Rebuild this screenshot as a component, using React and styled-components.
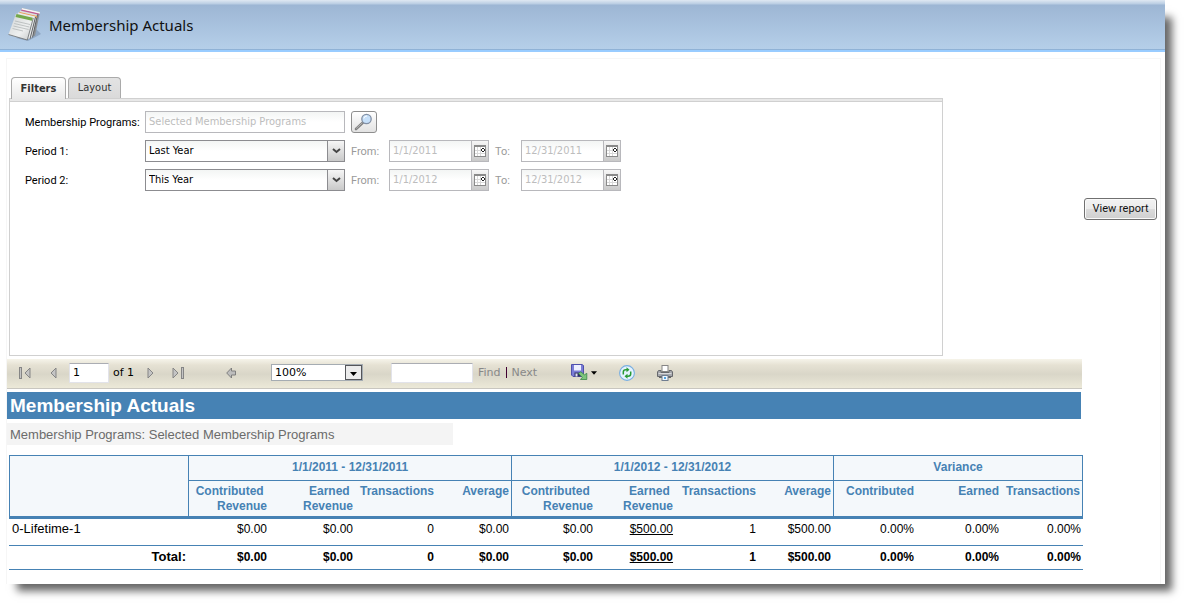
import React from 'react';
import styled, { createGlobalStyle, css } from 'styled-components';

const blue = '#4682b4';
const uiFont = '"DejaVu Sans Condensed", "Noto Sans", sans-serif';
const labelFont = 'Roboto, sans-serif';
const wideFont = '"DejaVu Sans", sans-serif';
const reportFont = '"Liberation Sans", Arial, sans-serif';

const GlobalStyle = createGlobalStyle`
  *, *::before, *::after { box-sizing: border-box; }
  body { margin: 0; background: #fff; font-family: ${uiFont}; font-size: 11px; color: #000; }
  button, input, select { font: inherit; color: inherit; margin: 0; }
`;

const Page = styled.main`
  margin: 0 25px 25px 0;
  background: #fff;
  box-shadow: 12px 12px 8px -5px rgba(0, 0, 0, 0.6);
`;

const Header = styled.header`
  display: flex;
  align-items: center;
  gap: 8px;
  height: 52px;
  padding-left: 8px;
  background: linear-gradient(#dfe8f2 0, #b8cce2 4px, #9db6d4 5px, #b5cfe9 49px);
  border-bottom: 2px solid #99ccff;
  box-shadow: inset 0 -1px #8fb2d6;

  h1 {
    margin: 0;
    font: 400 15px/24px "Noto Sans", sans-serif;
    color: #111;
  }
`;

const Content = styled.section`
  margin: 6px 4px 0 6px;
  padding-bottom: 14px;
  border: 1px solid #f6f6f6;
  border-bottom: 0;
`;

const Parameters = styled.div`
  display: flex;
  align-items: center;
  padding: 0 3px 0 2px;
`;

const FilterArea = styled.div`
  flex: 1;
  min-width: 0;
  padding: 18px 0 3px;
`;

const SubmitArea = styled.div`
  display: flex;
  justify-content: flex-end;
  width: 214px;
`;

const ViewButton = styled.button`
  width: 73px;
  height: 22px;
  padding: 0;
  border: 1px solid #707070;
  border-radius: 3px;
  background: linear-gradient(#f3f3f3 0, #ebebeb 48%, #dcdcdc 50%, #cfcfcf 100%);
  box-shadow: inset 0 0 0 1px #fafafa;
  font: 11px/20px ${labelFont};
  color: #111;
  white-space: nowrap;
`;

const TabList = styled.div`
  display: flex;
  align-items: flex-start;
  gap: 2px;
  height: 21px;
  padding-left: 2px;
`;

const Tab = styled.button`
  height: 21px;
  padding: 0;
  width: ${(p) => (p.$active ? 55 : 53)}px;
  border: 1px solid #aaa;
  border-bottom: 0;
  border-radius: 4px 4px 0 0;
  background: linear-gradient(#e3e3e3, #dadada);
  color: #333;
  line-height: 20px;
  ${(p) =>
    p.$active &&
    css`
      position: relative;
      height: 22px;
      background: linear-gradient(#fff, #e9e9e9);
      font-weight: 700;
    `}
`;

const Panel = styled.div`
  min-height: 258px;
  border: 1px solid #d0d0d0;
`;

const PanelStrip = styled.div`
  height: 3px;
  background: #e8e8e8;
  border-bottom: 1px solid #d0d0d0;
`;

const Form = styled.form`
  display: flex;
  flex-direction: column;
  gap: 7px;
  padding: 9px 15px;
`;

const FormRow = styled.div`
  display: flex;
  align-items: center;
  height: 22px;
`;

const Label = styled.label`
  width: 120px;
  padding-top: 2px;
  font: 11px/20px ${labelFont};
  white-space: nowrap;
`;

const RangeLabel = styled(Label)`
  width: ${(p) => p.$width}px;
  padding-left: 6px;
  color: #9a9a9a;
`;

const Field = styled.div`
  position: relative;
  display: flex;
  width: ${(p) => p.$width}px;
  height: 22px;
  border: 1px solid ${(p) => (p.$muted ? '#b8b8bc' : '#8c8c90')};
  background: linear-gradient(#f3f5f4, #fff 10px);
  color: ${(p) => (p.$muted ? '#bdbdbd' : '#000')};

  input, select {
    flex: 1;
    min-width: 0;
    height: 20px;
    padding: 0 3px 2px;
    border: 0;
    outline: 0;
    border-radius: 0;
    background: transparent;
    appearance: none;
  }
`;

const endCap = css`
  display: flex;
  align-items: center;
  justify-content: center;
  width: 17px;
  height: 20px;
  padding: 0;
  border: 0;
  border-left: 1px solid ${(p) => (p.$muted ? '#b8b8bc' : '#8c8c90')};
  background: linear-gradient(#f6f6f6, #c9c9c9);
`;

const SelectArrow = styled.span`
  ${endCap}
  position: absolute;
  top: 0;
  right: 0;
  pointer-events: none;
`;

const CalendarButton = styled.button`
  ${endCap}
`;

const SearchButton = styled.button`
  display: flex;
  align-items: center;
  justify-content: center;
  width: 26px;
  height: 22px;
  margin-left: 6px;
  padding: 0;
  border: 1px solid #8e8e8e;
  border-radius: 3px;
  background: linear-gradient(#fff, #e2e2e2);
`;

const Report = styled.div`
  margin-right: 78px;
`;

const Toolbar = styled.div`
  display: flex;
  align-items: center;
  height: 30px;
  padding: 0 12px 2px;
  border-bottom: 1px solid #c8c6c0;
  background: linear-gradient(#f6f4ea 0, #e6e2d4 6px, #d9d6c8 15px, #e2dfd0 22px, #ece9d8 29px);
  font: 11px/20px ${wideFont};
`;

const ToolGroup = styled.div`
  display: flex;
  align-items: center;
  width: ${(p) => p.$width}px;
  gap: ${(p) => p.$gap || 0}px;
`;

const ToolButton = styled.button`
  display: flex;
  flex: none;
  align-items: center;
  padding: 0;
  border: 0;
  background: none;
`;

const ToolInput = styled.input`
  width: ${(p) => p.$width}px;
  height: 20px;
  padding: 0 3px;
  border: 1px solid #e2e3ea;
  border-top-color: #abadb3;
  border-radius: 1px;
  background: #fff;
`;

const ZoomField = styled.div`
  position: relative;
  width: 92px;
  height: 17px;
  border: 1px solid #a5acb2;
  background: #fff;

  select {
    display: block;
    width: 100%;
    height: 15px;
    padding: 0 3px;
    border: 0;
    background: transparent;
    appearance: none;
    line-height: 15px;
  }
`;

const ZoomArrow = styled.span`
  position: absolute;
  top: 0;
  right: 0;
  display: flex;
  align-items: flex-end;
  justify-content: center;
  width: 17px;
  height: 15px;
  padding-bottom: 3px;
  border: 1px solid #55565a;
  background: #ececec;
  pointer-events: none;
`;

const ToolLink = styled.a`
  color: #888;
  text-decoration: none;
`;

const Divider = styled.span`
  width: 1px;
  height: 11px;
  background: #400030;
`;

const ReportTitle = styled.h2`
  margin: 3px 1px 0 0;
  height: 27px;
  padding-left: 3px;
  background: ${blue};
  color: #fff;
  font: 700 19px/27px ${reportFont};
`;

const ReportSubtitle = styled.p`
  width: fit-content;
  min-width: 446px;
  margin: 4px 0 10px;
  padding: 2px 0 0 3px;
  background: #f4f4f4;
  color: #6b6b6b;
  font: 13px/20px ${reportFont};
`;

const Table = styled.table`
  width: calc(100% - 1px);
  margin-left: 2px;
  table-layout: fixed;
  border-collapse: separate;
  border-spacing: 0;
  font: 12px/15px ${reportFont};
`;

const HeadCell = styled.th`
  height: ${(p) => (p.$group ? 25 : 39)}px;
  padding: ${(p) => (p.$group ? '0 0 2px' : '3px 2px 0 0')};
  vertical-align: ${(p) => (p.$group ? 'middle' : 'top')};
  text-align: ${(p) => (p.$group ? 'center' : 'right')};
  white-space: pre;
  border-top: 1px solid ${blue};
  border-left: ${(p) => (p.$start ? `1px solid ${blue}` : '0')};
  border-right: ${(p) => (p.$end ? `1px solid ${blue}` : '0')};
  border-bottom: ${(p) => (p.$thick ? `3px solid ${blue}` : '0')};
  background: #f4f8fb;
  color: ${blue};
`;

const Cell = styled.td`
  height: ${(p) => (p.$total ? 24 : 27)}px;
  padding: ${(p) => (p.$total ? 4 : 3)}px 2px 0 0;
  vertical-align: top;
  text-align: right;
  font-weight: ${(p) => (p.$total ? 700 : 400)};
  border-bottom: 1px solid ${blue};

  a { color: #000; }
`;

const RowHead = styled.th`
  padding: ${(p) => (p.$total ? '3px 2px 0' : '2px 3px 0')};
  vertical-align: top;
  text-align: ${(p) => (p.$total ? 'right' : 'left')};
  font-size: 13px;
  font-weight: ${(p) => (p.$total ? 700 : 400)};
  border-bottom: 1px solid ${blue};
`;

const ReportIcon = () => (
  <svg width="33" height="34" viewBox="0 0 33 34" aria-hidden="true">
    <defs>
      <linearGradient id="sheet" x1="0" y1="0" x2="1" y2="1">
        <stop offset="0" stopColor="#cfd2d2" />
        <stop offset=".6" stopColor="#eef0f0" />
        <stop offset="1" stopColor="#c3c6c6" />
      </linearGradient>
    </defs>
    <path d="M8 30 L20 33 L33 26 L28 21 Z" fill="#6f88a6" opacity=".5" />
    <path d="M14 0 L32 4 L27 28 L10 24 Z" fill="#8d9093" />
    <path d="M14 0 L32 4 L31.500 6 L13.500 2 Z" fill="#f6f6f6" />
    <path d="M13.500 1.500 L31 5.500 L30.500 7 L13 3.200 Z" fill="#c25c92" />
    <path d="M12 2.500 L29.500 6.500 L29 9 L24.500 29.500 L8 26 Z" fill="#dcdedf" />
    <path d="M29.500 6.500 L24.500 29.500" stroke="#5e6164" strokeWidth="1" />
    <path d="M11.500 4 L29 8 L28.500 10 L11 6 Z" fill="#eb9a4a" />
    <path d="M10 4.500 L27.500 8.500 L22.500 31 L5 28 Z" fill="#e8eaea" />
    <path d="M27.500 9 L22 31" stroke="#5e6164" strokeWidth="1" />
    <path d="M8 5.500 L25.500 9.500 L19.500 32 L.5 26.500 Z" fill="url(#sheet)" />
    <path d="M25.300 10 L19.300 32 L.5 26.500" stroke="#74787b" strokeWidth=".9" fill="none" />
    <path d="M8.500 6 L24.800 9.800 L24 12.800 L7.500 9 Z" fill="#73a84c" />
    <path d="M7 13 L22 16.500 M6.200 15.500 L21.300 19 M5.400 18 L20.600 21.500 M4.500 20.500 L15 23" stroke="#b3b7b7" strokeWidth=".8" fill="none" />
  </svg>
);

const MagnifierIcon = () => (
  <svg width="20" height="18" viewBox="0 0 20 18" aria-hidden="true">
    <path d="M2 16 L9 9.500" stroke="#808080" strokeWidth="2.600" strokeLinecap="round" />
    <path d="M2.200 15.500 L8.500 9.700" stroke="#b5b5b5" strokeWidth="1" />
    <circle cx="12.500" cy="6" r="4.700" fill="#c6e0fa" stroke="#8290a5" strokeWidth="1.300" />
    <path d="M9.800 5.500 A3 3 0 0 1 13 3" stroke="#fff" fill="none" />
  </svg>
);

const ChevronIcon = () => (
  <svg width="9" height="6" viewBox="0 0 9 6" aria-hidden="true">
    <path d="M1 1 L4.500 4 L8 1" fill="none" stroke="#444" strokeWidth="2" />
  </svg>
);

const CalendarIcon = () => (
  <svg width="12" height="12" viewBox="0 0 12 12" shapeRendering="crispEdges" aria-hidden="true">
    <rect x=".5" y=".5" width="11" height="11" fill="#fff" stroke="#8a8a8a" />
    <rect x="0" y="0" width="12" height="2" fill="#8a8a8a" />
    <path d="M3.500 2 V11 M6.500 2 V11 M1 5.500 H11 M1 8.500 H11" stroke="#d9d9d9" />
    <path d="M8 3.500 H10 M8 6.500 H10 M7.500 4 V6 M10.500 4 V6" stroke="#222" />
    <rect x="8" y="4" width="2" height="2" fill="#fff" />
  </svg>
);

const NavIcon = ({ back, bar }) => (
  <svg width={bar ? 12 : 7} height="12" viewBox={bar ? '0 0 12 12' : '0 0 7 12'} aria-hidden="true">
    <g
      transform={back ? undefined : `translate(${bar ? 12 : 7} 0) scale(-1 1)`}
      fill="#c4c4c4"
      stroke="#858585"
      strokeWidth="1"
    >
      {bar && <rect x=".5" y=".5" width="2" height="11" />}
      <path d={bar ? 'M11 1 V11 L6 6 Z' : 'M6 1 V11 L1 6 Z'} />
    </g>
  </svg>
);

const BackIcon = () => (
  <svg width="10" height="12" viewBox="0 0 10 12" aria-hidden="true">
    <path d="M.7 6 L5.500 1 V4 H9.500 V8 H5.500 V11 Z" fill="#bdbdbd" stroke="#777" strokeWidth=".9" />
  </svg>
);

const CaretIcon = ({ width = 7 }) => (
  <svg width={width} height="4" viewBox="0 0 7 4" aria-hidden="true">
    <path d="M0 0 H7 L3.500 4 Z" fill="#000" />
  </svg>
);

const ExportIcon = () => (
  <svg width="17" height="18" viewBox="0 0 17 18" aria-hidden="true">
    <path d="M.5 .5 H11 L12.500 1.500 V12.500 H2 L.5 11 Z" fill="#7a7cd6" stroke="#4f50ac" />
    <rect x="3" y="1" width="7" height="5.500" fill="#eef0ff" />
    <rect x="3.500" y="8.500" width="6" height="4" fill="#303062" />
    <rect x="4.500" y="9.500" width="2" height="3" fill="#dfe2f6" />
    <path d="M7.500 9.500 L9.800 7.800 L13.500 10.800 L15.800 9.300 V15.500 H9.500 L11.300 13.300 Z" fill="#7cc47c" stroke="#388647" strokeWidth=".8" />
  </svg>
);

const RefreshIcon = () => (
  <svg width="16" height="16" viewBox="0 0 16 16" aria-hidden="true">
    <circle cx="8" cy="8" r="7.400" fill="#e4f2ff" stroke="#77aee0" strokeWidth="1.100" />
    <path d="M4.300 9.500 V7 Q4.300 4.800 7 4.800 H8" stroke="#289a34" strokeWidth="1.500" fill="none" />
    <path d="M7.500 2.300 L10.500 4.800 L7.500 7.300 Z" fill="#289a34" />
    <path d="M11.700 6.500 V9 Q11.700 11.200 9 11.200 H8" stroke="#289a34" strokeWidth="1.500" fill="none" />
    <path d="M8.500 8.700 L5.500 11.200 L8.500 13.700 Z" fill="#289a34" />
  </svg>
);

const PrinterIcon = () => (
  <svg width="16" height="16" viewBox="0 0 16 16" aria-hidden="true">
    <rect x="5" y=".5" width="6" height="6" fill="#fff" stroke="#858585" />
    <path d="M1.500 5.500 H4 V7.500 H12 V5.500 H14.500 L15.500 7 V11.500 H.5 V7 Z" fill="#a6a8ad" stroke="#66686d" />
    <path d="M1.500 8.500 H14.500" stroke="#d7d8dc" />
    <rect x="2" y="12" width="12" height="1" fill="#666" />
    <rect x="5" y="10.500" width="6" height="5" fill="#eef6ff" stroke="#6f7d90" />
    <rect x="7" y="12" width="2" height="2" fill="#4fa3e2" />
  </svg>
);

const DateField = ({ id, value }) => (
  <Field $width={100} $muted>
    <input id={id} defaultValue={value} readOnly />
    <CalendarButton type="button" $muted aria-label="Choose date">
      <CalendarIcon />
    </CalendarButton>
  </Field>
);

const PeriodRow = ({ n, option, from, to }) => (
  <FormRow>
    <Label htmlFor={`period${n}`}>Period {n}:</Label>
    <Field $width={200}>
      <select id={`period${n}`} defaultValue={option}>
        <option>Last Year</option>
        <option>This Year</option>
      </select>
      <SelectArrow><ChevronIcon /></SelectArrow>
    </Field>
    <RangeLabel $width={44} htmlFor={`from${n}`}>From:</RangeLabel>
    <DateField id={`from${n}`} value={from} />
    <RangeLabel $width={32} htmlFor={`to${n}`}>To:</RangeLabel>
    <DateField id={`to${n}`} value={to} />
  </FormRow>
);

const columnWidths = [179, 81, 86, 81, 75, 84, 80, 83, 75, 83, 85, 82];

const columns = [
  { text: 'Contributed \nRevenue', start: true },
  { text: 'Earned \nRevenue' },
  { text: 'Transactions' },
  { text: 'Average' },
  { text: 'Contributed \nRevenue', start: true },
  { text: 'Earned \nRevenue' },
  { text: 'Transactions' },
  { text: 'Average' },
  { text: 'Contributed', start: true },
  { text: 'Earned' },
  { text: 'Transactions', end: true },
];

const values = ['$0.00', '$0.00', '0', '$0.00', '$0.00', '$500.00', '1', '$500.00', '0.00%', '0.00%', '0.00%'];

const DataRow = ({ name, total }) => (
  <tr>
    <RowHead scope="row" $total={total}>{name}</RowHead>
    {values.map((v, i) => (
      <Cell key={i} $total={total}>{i === 5 ? <a href="#detail">{v}</a> : v}</Cell>
    ))}
  </tr>
);

export default function App() {
  return (
    <>
      <GlobalStyle />
      <Page>
        <Header>
          <ReportIcon />
          <h1>Membership Actuals</h1>
        </Header>
        <Content>
          <Parameters>
            <FilterArea>
              <TabList role="tablist">
                <Tab role="tab" aria-selected="true" $active>Filters</Tab>
                <Tab role="tab" aria-selected="false">Layout</Tab>
              </TabList>
              <Panel role="tabpanel">
                <PanelStrip />
                <Form>
                  <FormRow>
                    <Label htmlFor="programs">Membership Programs:</Label>
                    <Field $width={200} $muted>
                      <input id="programs" defaultValue="Selected Membership Programs" readOnly />
                    </Field>
                    <SearchButton type="button" aria-label="Search programs"><MagnifierIcon /></SearchButton>
                  </FormRow>
                  <PeriodRow n={1} option="Last Year" from="1/1/2011" to="12/31/2011" />
                  <PeriodRow n={2} option="This Year" from="1/1/2012" to="12/31/2012" />
                </Form>
              </Panel>
            </FilterArea>
            <SubmitArea>
              <ViewButton type="button">View report</ViewButton>
            </SubmitArea>
          </Parameters>
          <Report>
            <Toolbar role="toolbar">
              <ToolGroup $width={50} $gap={19}>
                <ToolButton aria-label="First page"><NavIcon back bar /></ToolButton>
                <ToolButton aria-label="Previous page"><NavIcon back /></ToolButton>
              </ToolGroup>
              <ToolGroup $width={78} $gap={4}>
                <ToolInput $width={40} aria-label="Page" defaultValue="1" />
                <span>of 1</span>
              </ToolGroup>
              <ToolGroup $width={79} $gap={18}>
                <ToolButton aria-label="Next page"><NavIcon /></ToolButton>
                <ToolButton aria-label="Last page"><NavIcon bar /></ToolButton>
              </ToolGroup>
              <ToolGroup $width={45}>
                <ToolButton aria-label="Back"><BackIcon /></ToolButton>
              </ToolGroup>
              <ToolGroup $width={120}>
                <ZoomField>
                  <select aria-label="Zoom" defaultValue="100%">
                    <option>100%</option>
                  </select>
                  <ZoomArrow><CaretIcon /></ZoomArrow>
                </ZoomField>
              </ToolGroup>
              <ToolGroup $width={180} $gap={5}>
                <ToolInput $width={82} aria-label="Find text" />
                <ToolLink href="#find">Find</ToolLink>
                <Divider />
                <ToolLink href="#next">Next</ToolLink>
              </ToolGroup>
              <ToolGroup $width={48} $gap={3}>
                <ToolButton aria-label="Export"><ExportIcon /></ToolButton>
                <CaretIcon width={6} />
              </ToolGroup>
              <ToolGroup $width={38}>
                <ToolButton aria-label="Refresh"><RefreshIcon /></ToolButton>
              </ToolGroup>
              <ToolButton aria-label="Print"><PrinterIcon /></ToolButton>
            </Toolbar>
            <ReportTitle>Membership Actuals</ReportTitle>
            <ReportSubtitle>Membership Programs: Selected Membership Programs</ReportSubtitle>
            <Table>
              <colgroup>
                {columnWidths.map((w, i) => <col key={i} width={w} />)}
              </colgroup>
              <thead>
                <tr>
                  <HeadCell rowSpan={2} $start $thick />
                  <HeadCell colSpan={4} $group $start>1/1/2011 - 12/31/2011</HeadCell>
                  <HeadCell colSpan={4} $group $start>1/1/2012 - 12/31/2012</HeadCell>
                  <HeadCell colSpan={3} $group $start $end>Variance</HeadCell>
                </tr>
                <tr>
                  {columns.map((c, i) => (
                    <HeadCell key={i} $start={c.start} $end={c.end} $thick>{c.text}</HeadCell>
                  ))}
                </tr>
              </thead>
              <tbody>
                <DataRow name="0-Lifetime-1" />
                <DataRow name="Total:" total />
              </tbody>
            </Table>
          </Report>
        </Content>
      </Page>
    </>
  );
}
